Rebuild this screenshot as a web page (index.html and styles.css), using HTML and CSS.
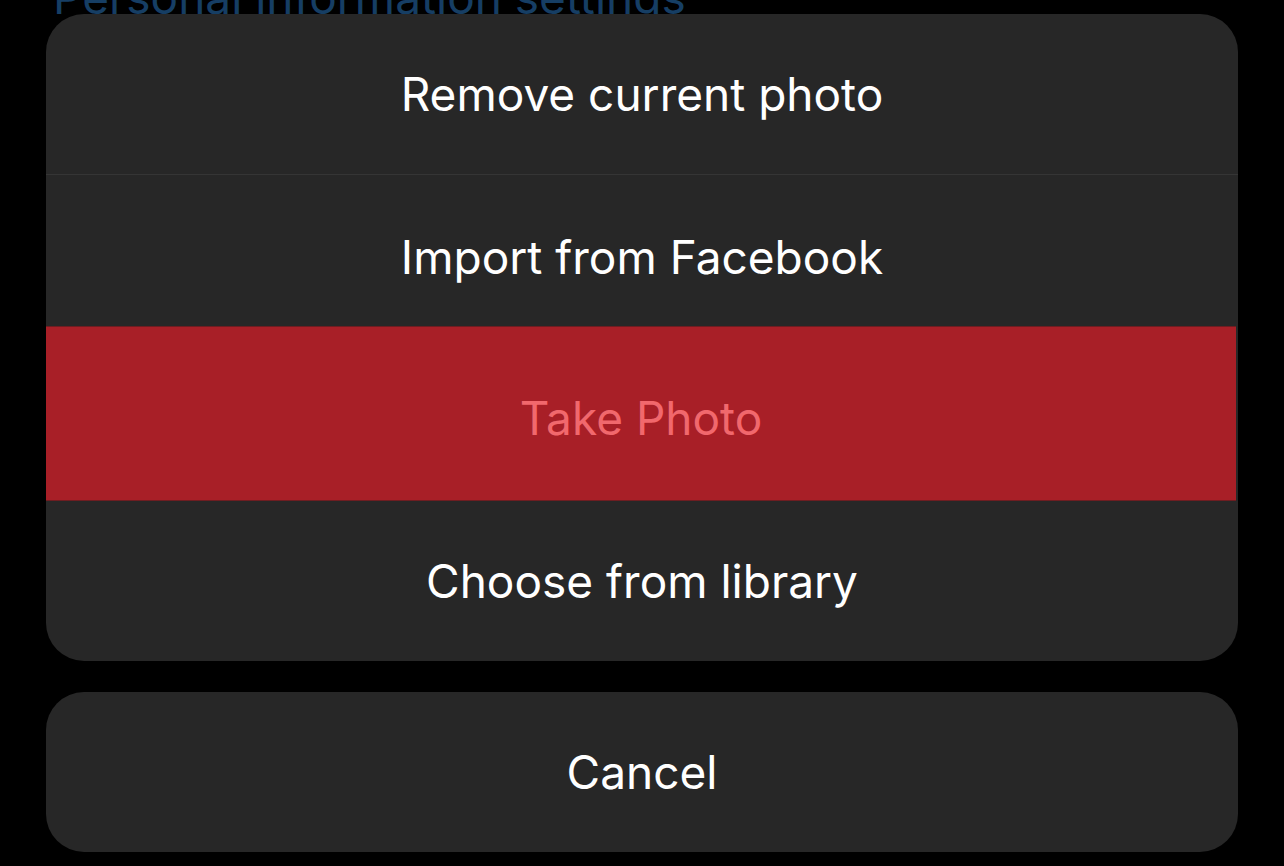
FILE: index.html
```html
<!DOCTYPE html>
<html lang="en">
  <head>
    <meta charset="UTF-8" />
    <meta name="viewport" content="width=device-width, initial-scale=1.0" />
    <title>Profile photo</title>
    <link rel="stylesheet" href="styles.css">
  </head>
  <body>
    <div class="screen">
      <!-- settings page peeking out behind the sheet -->
      <div class="page-title">
        <span>Personal information settings</span>
      </div>

      <div class="action-sheet">
        <div class="action-group">
          <button class="action action-first">Remove current photo</button>
          <button class="action action-second">Import from Facebook</button>
          <button class="action action-active">Take Photo</button>
          <button class="action action-last">Choose from library</button>
        </div>

        <button class="action action-cancel">Cancel</button>
      </div>
    </div>
  </body>
</html>
```

FILE: styles.css
```css
body {
  background-color: #000;
  margin: 0;
  font-family: Inter, "Noto Sans", sans-serif;
  color: #fff;
}

.screen {
  padding: 0 46px;
  height: 866px;
  overflow: hidden;
}

.page-title {
  height: 14px;
  overflow: hidden;
  padding-left: 7px;
}

.page-title span {
  display: block;
  margin-top: -26px;
  font-size: 46px;
  line-height: 46px;
  color: #163e64;
}

.action-sheet {
  display: flex;
  flex-direction: column;
  gap: 31px;
}

.action-group {
  background-color: #272727;
  border-radius: 38px;
  overflow: hidden;
  display: flex;
  flex-direction: column;
}

.action {
  display: flex;
  align-items: center;
  justify-content: center;
  box-sizing: border-box;
  border: none;
  background: none;
  color: #fff;
  font-family: inherit;
  font-size: 46px;
  line-height: 56px;
  padding: 0;
  width: 100%;
}

.action-first {
  height: 161px;
  border-bottom: 1px solid #353535;
}

.action-second {
  height: 151px;
  padding-top: 12px;
}

.action-active {
  height: 175px;
  padding-top: 8px;
  background-color: #a81f27;
  color: #f1686d;
  box-shadow: inset 0 1px 0 #6e1d21, inset 0 -1px 0 #6e1d21;
  width: calc(100% - 2px);
}

.action-last {
  height: 160px;
}

.action-cancel {
  height: 160px;
  background-color: #272727;
  border-radius: 38px;
}
```
